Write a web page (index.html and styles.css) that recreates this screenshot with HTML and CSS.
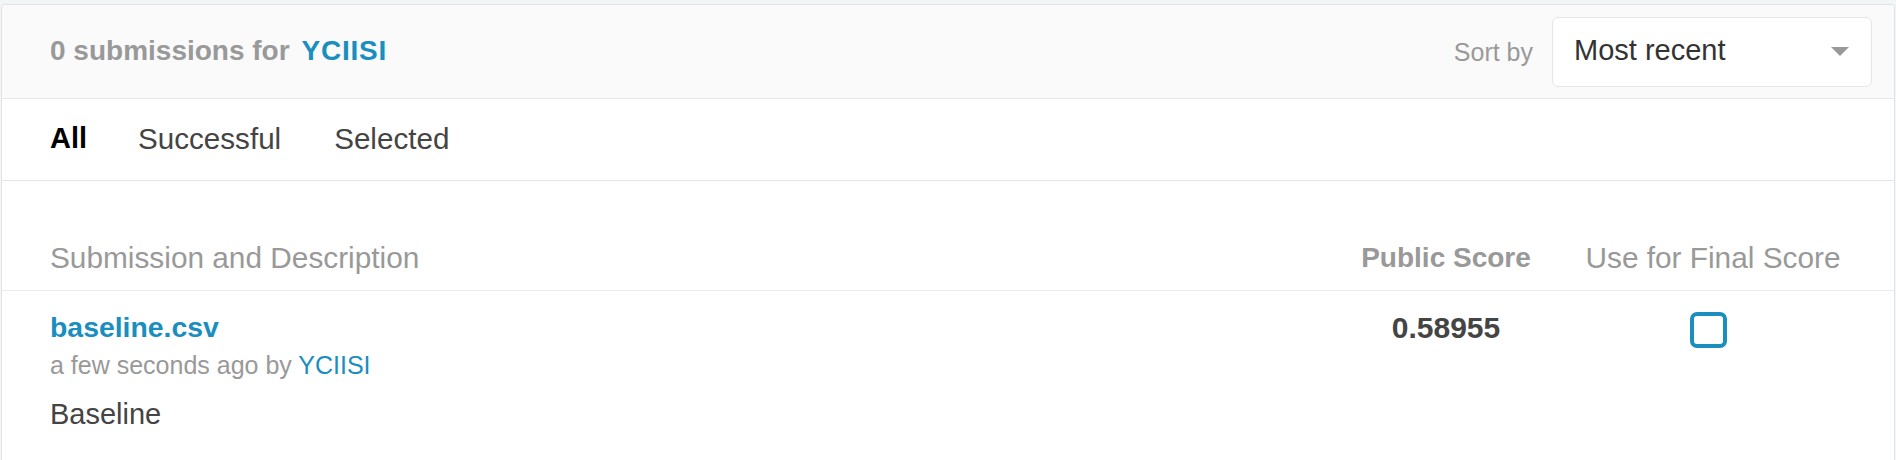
FILE: index.html
```html
<!DOCTYPE html>
<html>
<head>
<meta charset="utf-8">
<link rel="stylesheet" href="styles.css">
</head>
<body>
<div class="card">
  <div class="card-header">
    <div class="title">0 submissions for <a class="link" href="#">YCIISI</a></div>
    <div class="sort">
      <span class="sort-label">Sort by</span>
      <div class="select">
        <span class="select-value">Most recent</span>
        <span class="caret"></span>
      </div>
    </div>
  </div>
  <div class="tabs">
    <span class="tab active">All</span>
    <span class="tab">Successful</span>
    <span class="tab">Selected</span>
  </div>
  <div class="table">
    <div class="thead">
      <div class="col-main">Submission and Description</div>
      <div class="col-score strong">Public Score</div>
      <div class="col-final">Use for Final Score</div>
    </div>
    <div class="trow">
      <div class="col-main">
        <a class="file" href="#">baseline.csv</a>
        <div class="meta">a few seconds ago by <a class="link" href="#">YCIISI</a></div>
        <div class="desc">Baseline</div>
      </div>
      <div class="col-score score">0.58955</div>
      <div class="col-final"><span class="checkbox"></span></div>
    </div>
  </div>
</div>
</body>
</html>
```
FILE: styles.css
```css
html, body {
  margin: 0;
  padding: 0;
}
body {
  background: #f3f6f6;
  font-family: "Liberation Sans", Arial, sans-serif;
  color: #444;
}
a { text-decoration: none; }
.link { color: #1b8ec0; }

.card {
  margin: 4px 1px 0 1px;
  background: #fff;
  border: 1px solid #e3e3e3;
  border-bottom: none;
  border-radius: 4px 4px 0 0;
  min-height: 470px;
}
.card-header {
  height: 93px;
  display: flex;
  align-items: center;
  justify-content: space-between;
  padding: 0 22px 0 48px;
  background: #fafafa;
  border-bottom: 1px solid #e8e8e8;
  border-radius: 4px 4px 0 0;
}
.title {
  font-size: 28px;
  line-height: 34px;
  font-weight: bold;
  color: #999;
  margin-top: -2px;
}
.title .link { margin-left: 4px; letter-spacing: 0.8px; }
.sort {
  display: flex;
  align-items: center;
}
.sort-label {
  font-size: 25px;
  color: #999;
  margin-right: 19px;
  margin-top: 2px;
}
.select {
  box-sizing: border-box;
  width: 320px;
  height: 70px;
  background: #fff;
  border: 1px solid #e6e6e6;
  border-radius: 6px;
  display: flex;
  align-items: center;
  justify-content: space-between;
  padding: 0 22px 0 21px;
}
.select-value {
  font-size: 29px;
  line-height: 34px;
  color: #333;
  margin-top: -3px;
}
.caret {
  width: 0;
  height: 0;
  border-left: 9px solid transparent;
  border-right: 9px solid transparent;
  border-top: 9px solid #999;
}

.tabs {
  display: flex;
  gap: 53px;
  padding: 22px 48px 24px;
  border-bottom: 1px solid #e6e6e6;
  font-size: 29.6px;
  line-height: 35px;
}
.tab { color: #444; }
.tab.active { color: #000; font-weight: bold; font-size: 29px; margin-right: -2px; }

.thead, .trow {
  display: grid;
  grid-template-columns: 1fr 200px 334px;
  padding: 0 14px 0 48px;
}
.thead {
  padding-top: 60px;
  padding-bottom: 15px;
  border-bottom: 1px solid #ececec;
  font-size: 29.8px;
  line-height: 34px;
  color: #999;
}
.thead .strong { font-weight: bold; font-size: 28px; }
.col-score, .col-final { text-align: center; }
.trow { padding-top: 19px; }
.file {
  display: block;
  color: #1b8ec0;
  font-weight: bold;
  font-size: 28.4px;
  line-height: 34px;
}
.meta {
  margin-top: 6px;
  font-size: 25px;
  line-height: 30px;
  color: #999;
}
.desc {
  margin-top: 17px;
  font-size: 29px;
  line-height: 35px;
  color: #444;
}
.score {
  font-weight: bold;
  font-size: 30px;
  line-height: 34px;
  color: #444;
  padding-top: 1px;
}
.trow .col-final { padding-right: 10px; }
.checkbox {
  display: inline-block;
  box-sizing: border-box;
  width: 37px;
  height: 36px;
  margin-top: 2px;
  border: 4px solid #1b8ec0;
  border-radius: 7px;
  background: #fff;
}
```
